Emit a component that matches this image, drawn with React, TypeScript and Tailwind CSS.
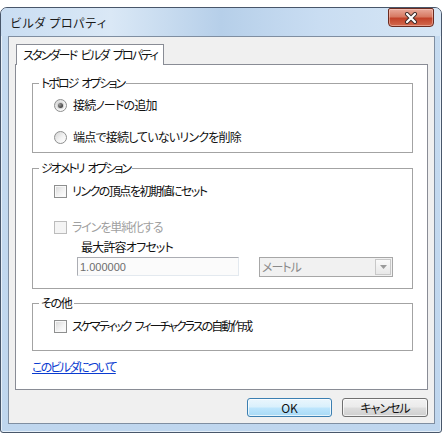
const Radio = ({ checked = false }: { checked?: boolean }) => (
  <span className="flex h-[13px] w-[13px] shrink-0 items-center justify-center rounded-full border border-[#8e8f8f] bg-[linear-gradient(135deg,#d4d4d4,#f3f3f3_55%,#ffffff)]">
    {checked && (
      <span className="h-[5px] w-[5px] rounded-full bg-[radial-gradient(circle_at_35%_35%,#9a9a9a,#1c1c1c)] shadow-[0_0_1px_1px_#cfcfcf]" />
    )}
  </span>
);

const Check = ({ disabled = false }: { disabled?: boolean }) => (
  <span
    className={`h-[13px] w-[13px] shrink-0 border ${
      disabled
        ? "border-[#bcbcbc] bg-[#f4f4f4]"
        : "border-[#8e8f8f] bg-[linear-gradient(135deg,#d6d6d6,#f2f2f2_55%,#ffffff)] shadow-[inset_0_0_0_1px_#f8f8f8]"
    }`}
  />
);

const Group = ({
  title,
  children,
  className = "",
  titleClass = "",
}: {
  title: string;
  children: React.ReactNode;
  className?: string;
  titleClass?: string;
}) => (
  <fieldset className={`border border-[#a3a3a3] ${className}`}>
    <legend className={`ml-[6px] px-[2px] leading-[14px] ${titleClass}`}>{title}</legend>
    {children}
  </fieldset>
);

export default function App() {
  return (
    <div className="h-[440px] w-[443px] bg-white pt-[7px] font-['Noto_Sans_CJK_JP',sans-serif] text-[12px] leading-[14px] text-[#111] [font-feature-settings:'palt']">
      {/* window frame */}
      <div className="flex h-[426px] w-[442px] flex-col rounded-t-[7px] rounded-b-[3px] border border-[#48566a] bg-[linear-gradient(to_bottom,#c6dbf0,#bfd6ee)] pl-[7px] pr-[6px] pb-[8px] shadow-[inset_0_0_0_1px_rgba(255,255,255,0.6)]">
        {/* title bar */}
        <div className="-ml-[7px] -mr-[6px] flex h-[28px] items-start justify-between rounded-t-[6px] bg-[linear-gradient(to_right,#c9ddf2_0%,#dae8f6_25%,#b6cfe9_50%,#c9ddf2_72%,#d6e6f5_100%)] pl-[9px] pr-[7px]">
          <span className="mt-[8px] leading-[14px] text-[#1a1a1a] [font-feature-settings:normal]">ビルダ プロパティ</span>
          <button className="flex h-[19px] w-[46px] items-center justify-center rounded-b-[4px] rounded-t-[2px] border border-[#6b2b20] bg-[linear-gradient(to_bottom,#e9a99a_0%,#d77a63_45%,#c2432a_55%,#d26a4f_100%)] shadow-[inset_0_0_0_1px_rgba(255,220,210,0.45)]">
            <svg width="14" height="12" viewBox="0 0 14 12">
              <path d="M3 2 L11 10 M11 2 L3 10" stroke="#3b2a28" strokeWidth="4" strokeLinecap="round" />
              <path d="M3 2 L11 10 M11 2 L3 10" stroke="#ffffff" strokeWidth="2.2" strokeLinecap="round" />
            </svg>
          </button>
        </div>

        {/* client area */}
        <div className="flex h-[388px] flex-col border border-[#7f8ea1] bg-[#f0f0f0] px-[6px] pt-[7px]">
          {/* tab header */}
          <div className="relative z-10 -mb-px ml-[1px] flex h-[21px] w-[148px] items-center whitespace-nowrap border border-b-0 border-[#898c95] bg-white pl-[6px] tracking-[-1.8px]">
            スタンダード{"\u2002"}ビルダ{"\u2002"}プロパティ
          </div>

          {/* tab page */}
          <div className="flex h-[326px] flex-col border border-[#898c95] bg-white pl-[16px] pr-[14px] pt-[11px]">
            <Group title={"トポロジ\u2002オプション"} titleClass="tracking-[-2px]" className="pb-[8px]">
              <div className="mt-[8px] ml-[21px] flex h-[14px] items-center gap-[6px]">
                <Radio checked />
                <span className="tracking-[-0.85px]">接続ノードの追加</span>
              </div>
              <div className="mt-[18px] ml-[21px] flex h-[14px] items-center gap-[6px]">
                <Radio />
                <span className="tracking-[-0.8px]">端点で接続していないリンクを削除</span>
              </div>
            </Group>

            <Group title={"ジオメトリ\u2002オプション"} titleClass="tracking-[-2px]" className="mt-[8px] pb-[11px]">
              <div className="mt-[9px] ml-[21px] flex h-[14px] items-center gap-[5px]">
                <Check />
                <span className="tracking-[-1.5px]">リンクの頂点を初期値にセット</span>
              </div>
              <div className="mt-[22px] ml-[21px] flex h-[14px] items-center gap-[5px] text-[#a0a0a0]">
                <Check disabled />
                <span className="tracking-[-1.1px]">ラインを単純化する</span>
              </div>
              <div className="mt-[6px] ml-[48px] h-[14px] tracking-[-0.8px]">最大許容オフセット</div>
              <div className="mt-[3px] ml-[44px] flex items-start gap-[20px]">
                <div className="flex h-[19px] w-[162px] items-center border border-[#abadb3] border-r-[#e3e9ef] border-b-[#e3e9ef] bg-[#fbfbfb] pl-[2px] font-['Liberation_Sans',sans-serif] text-[11px] text-[#6d6d6d]">
                  1.000000
                </div>
                <div className="flex h-[20px] w-[134px] items-center justify-between border border-[#a7a7a7] bg-[#f1f1f1] pl-[2px] pr-[1px] text-[#8a8a8a]">
                  <span className="tracking-[-1px]">メートル</span>
                  <span className="flex h-[16px] w-[16px] items-center justify-center border border-[#c8c8c8] bg-[linear-gradient(to_bottom,#fafafa,#e8e8e8)]">
                    <svg width="7" height="4" viewBox="0 0 7 4">
                      <path d="M0 0 H7 L3.5 4 Z" fill="#9a9a9a" />
                    </svg>
                  </span>
                </div>
              </div>
            </Group>

            <Group title="その他" titleClass="tracking-[-1.3px]" className="mt-[7px] pb-[17px]">
              <div className="mt-[9px] ml-[21px] flex h-[14px] items-center gap-[5px]">
                <Check />
                <span className="tracking-[-2px]">スケマティック{"\u2002"}フィーチャクラスの自動作成</span>
              </div>
            </Group>

            <a className="mt-[9px] self-start leading-[14px] tracking-[-1.8px] text-[#0a3bd0] underline">このビルダについて</a>
          </div>

          {/* buttons */}
          <div className="mt-[8px] flex justify-end gap-[10px]">
            <button className="h-[19px] w-[85px] rounded-[3px] border border-[#3c7fb1] bg-[linear-gradient(to_bottom,#eaf6fd_0%,#d9f0fc_48%,#bee6fd_52%,#a7d9f5_100%)] leading-[14px] shadow-[inset_0_0_0_1px_rgba(255,255,255,0.7)] [font-feature-settings:normal]">
              OK
            </button>
            <button className="h-[19px] w-[86px] rounded-[3px] border border-[#707070] bg-[linear-gradient(to_bottom,#f2f2f2_0%,#ebebeb_48%,#dddddd_52%,#cfcfcf_100%)] leading-[14px] tracking-[-1px] shadow-[inset_0_0_0_1px_rgba(255,255,255,0.7)]">
              キャンセル
            </button>
          </div>
        </div>
      </div>
    </div>
  );
}
